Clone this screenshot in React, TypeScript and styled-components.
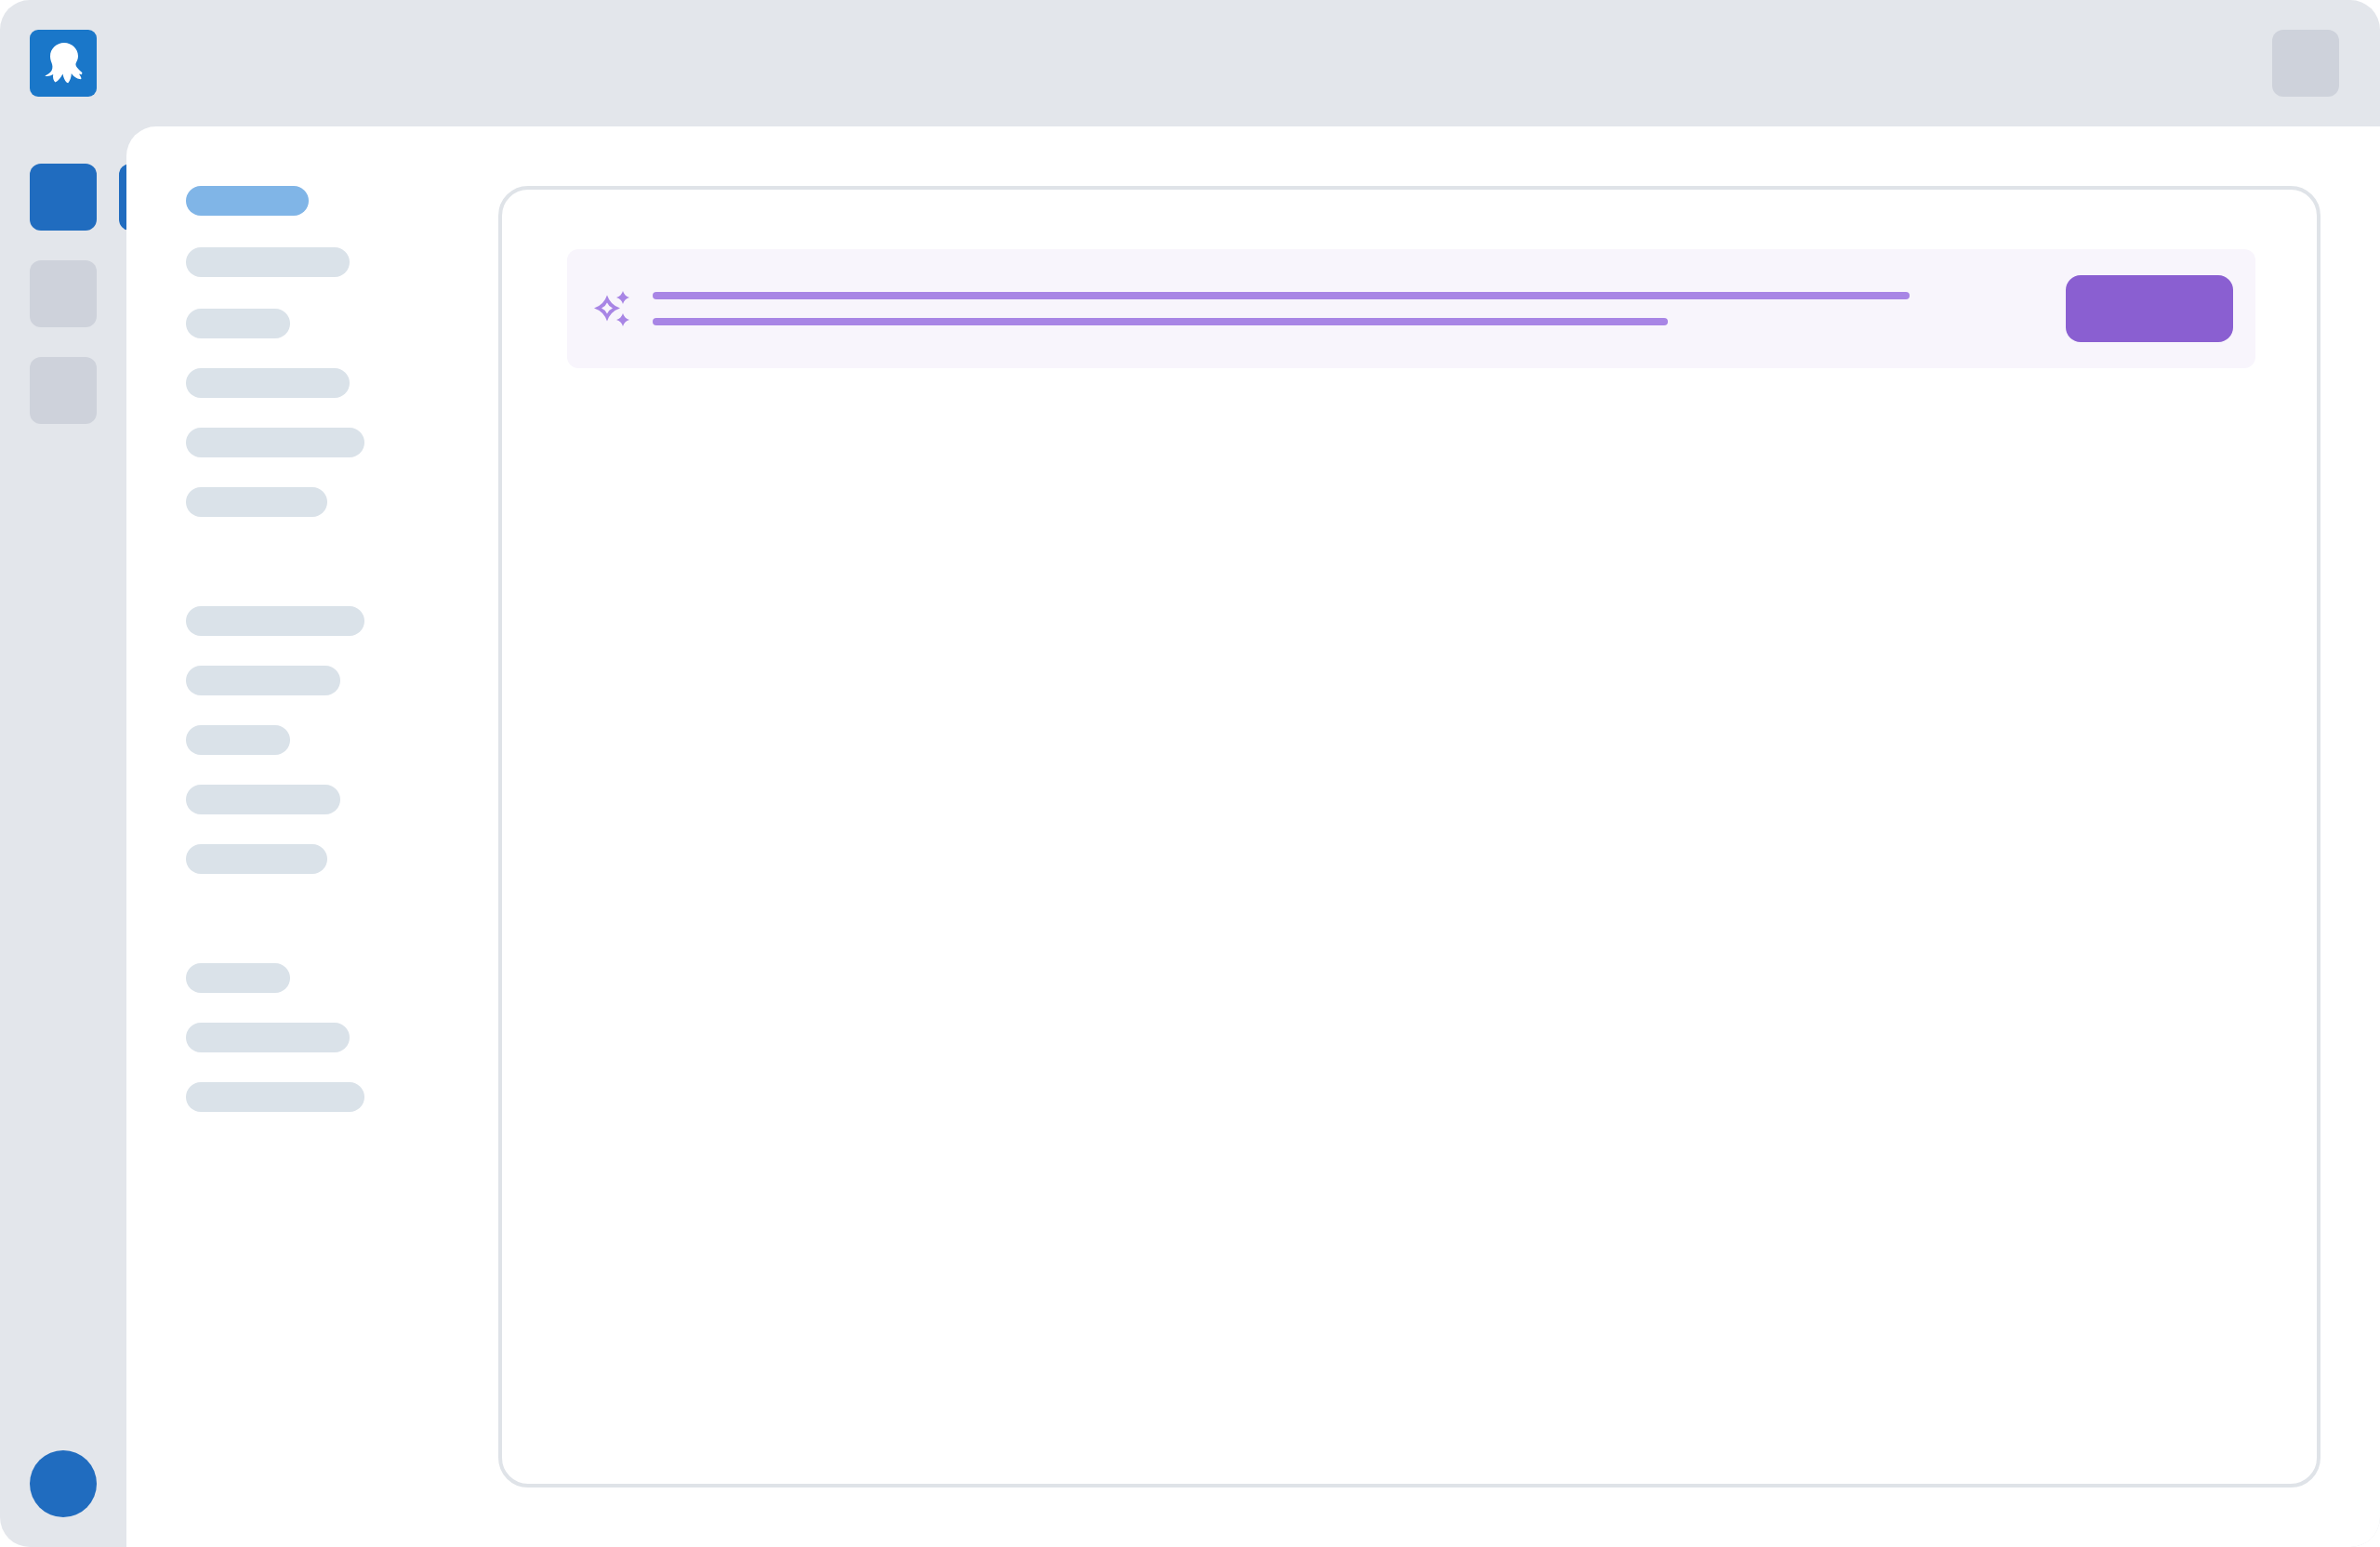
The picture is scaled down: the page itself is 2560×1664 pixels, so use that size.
import React from 'react';
import styled, { createGlobalStyle } from 'styled-components';

const GlobalStyle = createGlobalStyle`
  * {
    box-sizing: border-box;
  }
  html, body {
    margin: 0;
    padding: 0;
    background: #ffffff;
  }
`;

const Shell = styled.div`
  width: 2560px;
  height: 1664px;
  display: flex;
  flex-direction: column;
  background: #e3e6eb;
  border-radius: 32px;
  overflow: hidden;
`;

const TopBar = styled.header`
  height: 136px;
  flex-shrink: 0;
  padding: 32px 44px 32px 32px;
  display: flex;
  align-items: flex-start;
  justify-content: space-between;
`;

const LogoTile = styled.div`
  width: 72px;
  height: 72px;
  border-radius: 9px;
  background: #1a77c9;
`;

const Tile = styled.div<{ $tone?: 'blue' | 'grey' }>`
  width: 72px;
  height: 72px;
  flex-shrink: 0;
  border-radius: 12px;
  background: ${(p) => (p.$tone === 'blue' ? '#206cbf' : '#ced2db')};
`;

const Body = styled.div`
  flex: 1;
  display: flex;
  min-height: 0;
`;

const Rail = styled.aside`
  width: 136px;
  flex-shrink: 0;
  padding: 40px 0 32px 32px;
  display: flex;
  flex-direction: column;
  gap: 32px;
  overflow: hidden;
`;

const RailRow = styled.div`
  display: flex;
  gap: 24px;
`;

const Avatar = styled.div`
  width: 72px;
  height: 72px;
  margin-top: auto;
  border-radius: 50%;
  background: #206cbf;
`;

const Panel = styled.main`
  flex: 1;
  display: flex;
  padding: 64px;
  background: #ffffff;
  border-top-left-radius: 32px;
`;

const Nav = styled.nav`
  width: 336px;
  flex-shrink: 0;
  display: flex;
  flex-direction: column;
  gap: 96px;
`;

const NavGroup = styled.div`
  display: flex;
  flex-direction: column;
  gap: 32px;
`;

const Pill = styled.div<{ $active?: boolean; $tall?: boolean }>`
  height: 32px;
  border-radius: 16px;
  margin-bottom: ${(p) => (p.$tall ? '2px' : '0')};
  background: ${(p) => (p.$active ? '#80b5e7' : '#dae2e9')};
`;

const Card = styled.section`
  flex: 1;
  padding: 64px 66px 64px 70px;
  border: 4px solid #dfe3e8;
  border-radius: 32px;
`;

const Banner = styled.div`
  height: 128px;
  padding: 0 24px 0 26px;
  display: flex;
  align-items: center;
  background: #f8f5fc;
  border-radius: 12px;
`;

const SparkleIcon = styled.svg`
  width: 44px;
  height: 44px;
  flex-shrink: 0;
  margin-right: 22px;
  color: #a885e5;
`;

const Lines = styled.div`
  flex: 1;
  display: flex;
  flex-direction: column;
  gap: 20px;
`;

const Line = styled.div`
  height: 8px;
  border-radius: 4px;
  background: #a885e5;
`;

const ActionButton = styled.div`
  width: 180px;
  height: 72px;
  flex-shrink: 0;
  border-radius: 16px;
  background: #8a5fd1;
`;

const OctopusLogo = () => (
  <svg width="72" height="72" viewBox="0 0 72 72">
    <path
      fill="#ffffff"
      d="M37 14C45.3 14 52 20.5 52 28.5C52 31.5 50.5 34 49.5 36.5C49 39.5 52.5 42.5 56.3 46C56.5 47 56 48 55.5 48.2L53 47.5C54 49 55 50.5 55.5 52.5C55.3 53 55 53.3 54.5 53.3C50 52.5 47 50 44.8 47C44.8 50.5 43.5 54.5 41.3 57.3C38.5 57 36.5 52 35.5 47.5C33.5 51 31 55 27.5 56.5C25.5 55 24.5 51.5 25.2 48C22.5 49.5 19.5 50.3 16.3 49.7C19 48 22 46.5 23.5 44C25 41 24.5 38 23.5 35.5C22.5 33 22 31 22 28.5C22 20.5 28.7 14 37 14Z"
    />
  </svg>
);

const Sparkles = () => (
  <SparkleIcon viewBox="0 0 44 44">
    <path
      fill="currentColor"
      fillRule="evenodd"
      d="M17 7.5Q20.5 18 31 21.5Q20.5 25 17 35.5Q13.5 25 3 21.5Q13.5 18 17 7.5ZM17 15.5Q15.2 19.7 11 21.5Q15.2 23.3 17 27.5Q18.8 23.3 23 21.5Q18.8 19.7 17 15.5Z"
    />
    <path fill="currentColor" d="M34 3Q35.6 8.4 41 10Q35.6 11.6 34 17Q32.4 11.6 27 10Q32.4 8.4 34 3Z" />
    <path fill="currentColor" d="M34 27Q35.6 32.4 41 34Q35.6 35.6 34 41Q32.4 35.6 27 34Q32.4 32.4 34 27Z" />
  </SparkleIcon>
);

interface NavItem {
  width: number;
  active?: boolean;
  tall?: boolean;
}

const navGroups: NavItem[][] = [
  [
    { width: 132, active: true, tall: true },
    { width: 176, tall: true },
    { width: 112 },
    { width: 176 },
    { width: 192 },
    { width: 152 },
  ],
  [{ width: 192 }, { width: 166 }, { width: 112 }, { width: 166 }, { width: 152 }],
  [{ width: 112 }, { width: 176 }, { width: 192 }],
];

const App = () => {
  return (
    <>
      <GlobalStyle />
      <Shell>
        <TopBar>
          <LogoTile>
            <OctopusLogo />
          </LogoTile>
          <Tile />
        </TopBar>
        <Body>
          <Rail>
            <RailRow>
              <Tile $tone="blue" />
              <Tile $tone="blue" />
            </RailRow>
            <Tile />
            <Tile />
            <Avatar />
          </Rail>
          <Panel>
            <Nav>
              {navGroups.map((group, i) => (
                <NavGroup key={i}>
                  {group.map((item, j) => (
                    <Pill key={j} $active={item.active} $tall={item.tall} style={{ width: item.width }} />
                  ))}
                </NavGroup>
              ))}
            </Nav>
            <Card>
              <Banner>
                <Sparkles />
                <Lines>
                  <Line style={{ width: 1352 }} />
                  <Line style={{ width: 1092 }} />
                </Lines>
                <ActionButton />
              </Banner>
            </Card>
          </Panel>
        </Body>
      </Shell>
    </>
  );
};

export default App;
